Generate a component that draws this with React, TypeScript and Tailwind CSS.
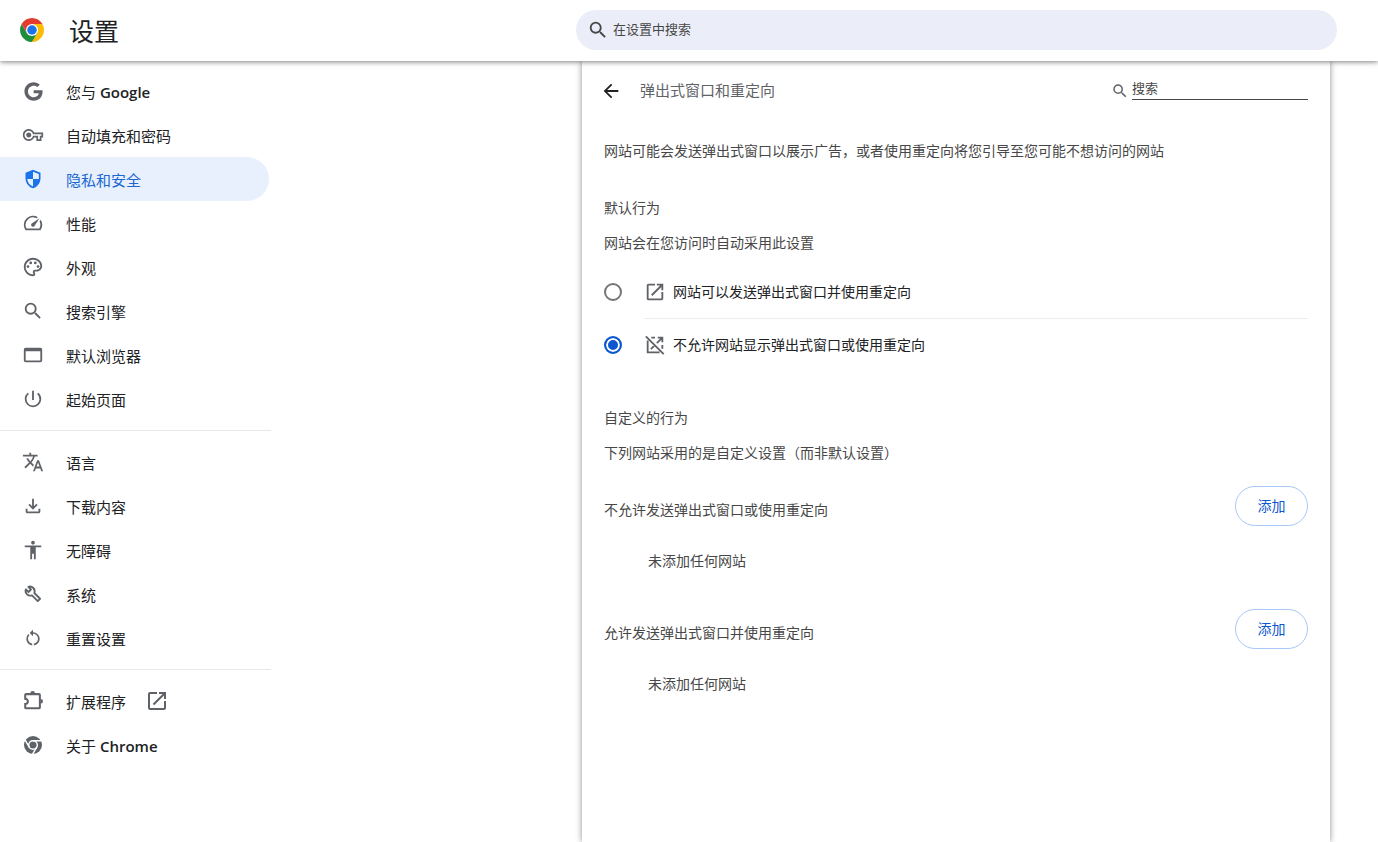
import React, { useState } from 'react';
import {
  MdAccessibility,
  MdArrowBack,
  MdOpenInNew,
  MdOutlinePalette,
  MdPowerSettingsNew,
  MdRestartAlt,
  MdSearch,
  MdSpeed,
  MdTranslate,
} from 'react-icons/md';
import { FaGoogle } from 'react-icons/fa';

const KeyIcon = () => (
  <svg viewBox="-1 -1 26 26" fill="currentColor" className="size-[22px]">
    <path d="M22 19h-6v-4h-2.68c-1.14 2.42-3.6 4-6.32 4-3.86 0-7-3.14-7-7s3.14-7 7-7c2.72 0 5.17 1.58 6.32 4H24v6h-2v4zm-4-2h2v-4h2v-2H11.94l-.23-.67C11.01 8.34 9.11 7 7 7c-2.76 0-5 2.24-5 5s2.24 5 5 5c2.11 0 4.01-1.34 4.71-3.33l.23-.67H18v4zM7 15c-1.65 0-3-1.35-3-3s1.35-3 3-3 3 1.35 3 3-1.35 3-3 3z" />
  </svg>
);

const ShieldIcon = () => (
  <svg viewBox="0 0 24 24" fill="currentColor" className="size-5">
    <path
      fillRule="evenodd"
      d="M12 1 3 4.500v6.500c0 5.550 3.840 10.740 9 12 5.160-1.260 9-6.450 9-12V4.500L12 1zM12 12H5c.530 4.120 3.280 7.790 7 8.940V12h7V6L12 3.190V12z"
    />
  </svg>
);

const BrowserIcon = () => (
  <svg viewBox="0 0 24 24" fill="currentColor" className="size-[22px]">
    <path d="M20 4H4a2 2 0 0 0-2 2v12a2 2 0 0 0 2 2h16a2 2 0 0 0 2-2V6a2 2 0 0 0-2-2zm0 14H4V8h16v10z" />
  </svg>
);

const DownloadIcon = () => (
  <svg viewBox="0 -960 960 960" fill="currentColor" className="size-[22px]">
    <path d="M480-320 280-520l56-58 104 104v-326h80v326l104-104 56 58-200 200ZM240-160q-33 0-56.500-23.500T160-240v-120h80v120h480v-120h80v120q0 33-23.500 56.500T720-160H240Z" />
  </svg>
);

const WrenchIcon = () => (
  <svg viewBox="0 0 24 24" className="size-5">
    <path
      d="M6.400 3.400 9.600 6.600 6.600 9.600 3.400 6.400A5.700 5.700 0 0 0 10.800 13.600L17.700 20.500 20.500 17.700 13.600 10.800A5.700 5.700 0 0 0 6.400 3.400z"
      fill="none"
      stroke="currentColor"
      strokeWidth="2.200"
      strokeLinejoin="round"
    />
  </svg>
);

const ExtensionIcon = () => (
  <svg viewBox="0 0 24 24" className="size-[22px]">
    <path
      d="M4.500 4.500h14a1 1 0 0 1 1 1v13.500a1 1 0 0 1-1 1h-14a1 1 0 0 1-1-1V15.300a2.900 2.900 0 0 0 0-5.800V5.500a1 1 0 0 1 1-1z"
      fill="none"
      stroke="currentColor"
      strokeWidth="2.200"
    />
    <path d="M9 3.700a2.600 2.600 0 0 1 5.200 0zM20.300 9.700a2.600 2.600 0 0 1 0 5.200z" fill="currentColor" />
  </svg>
);

const OpenBlockedIcon = () => (
  <svg viewBox="0 0 24 24" fill="none" stroke="currentColor" strokeWidth="2" className="size-[22px]">
    <path d="M4 7v13h13M8 4h4M20 12v4M15 4h5v5M19.500 4.500l-5.500 5.500M11.500 12.500l-4 4M2 2.500l19.500 19.500" />
  </svg>
);

const ChromeMonoIcon = () => (
  <svg viewBox="0 0 48 48" className="size-[18px]">
    <circle cx="24" cy="24" r="24" fill="currentColor" />
    <g fill="none" stroke="#fff" strokeWidth="4">
      <circle cx="24" cy="24" r="11.500" />
      <path d="M24 12.500h24M14 29.800 2 9M34 29.800 22 50" />
    </g>
  </svg>
);

const ChromeLogo = () => (
  <svg viewBox="0 0 48 48" className="size-6 shrink-0">
    <path d="M44.780 12A24 24 0 0 1 24 48l10.390-18L24 12z" fill="#fbbc04" />
    <path d="M24 48A24 24 0 0 1 3.220 12l10.390 18L34.390 30z" fill="#1e8e3e" />
    <path d="M3.220 12 13.610 30 24 24 34.390 30 24 12h20.780A24 24 0 0 0 3.220 12z" fill="#e33b2e" />
    <circle cx="24" cy="24" r="12" fill="#fff" />
    <circle cx="24" cy="24" r="9.500" fill="#1a73e8" />
  </svg>
);

interface MenuItem {
  label: string;
  latin?: string;
  icon: React.ReactNode;
  active?: boolean;
  external?: boolean;
}

const menuGroups: MenuItem[][] = [
  [
    { label: '您与', latin: 'Google', icon: <FaGoogle size={19} /> },
    { label: '自动填充和密码', icon: <KeyIcon /> },
    { label: '隐私和安全', icon: <ShieldIcon />, active: true },
    { label: '性能', icon: <MdSpeed size={22} /> },
    { label: '外观', icon: <MdOutlinePalette size={22} /> },
    { label: '搜索引擎', icon: <MdSearch size={22} /> },
    { label: '默认浏览器', icon: <BrowserIcon /> },
    { label: '起始页面', icon: <MdPowerSettingsNew size={22} /> },
  ],
  [
    { label: '语言', icon: <MdTranslate size={22} /> },
    { label: '下载内容', icon: <DownloadIcon /> },
    { label: '无障碍', icon: <MdAccessibility size={22} /> },
    { label: '系统', icon: <WrenchIcon /> },
    { label: '重置设置', icon: <MdRestartAlt size={20} /> },
  ],
  [
    { label: '扩展程序', icon: <ExtensionIcon />, external: true },
    { label: '关于', latin: 'Chrome', icon: <ChromeMonoIcon /> },
  ],
];

const Sidebar = () => (
  <nav className="w-[271px] shrink-0 pt-2">
    {menuGroups.map((group, index) => (
      <ul key={index} className={index > 0 ? 'mt-[9px] border-t border-[#e8e8e8] pt-[9px]' : ''}>
        {group.map((item) => (
          <li key={item.label}>
            <a
              href="#"
              className={`mr-0.5 flex h-11 items-center rounded-r-full pl-[22px] text-[15px] ${
                item.active ? 'bg-[#e8f0fe] text-[#1967d2]' : 'text-[#202124]'
              }`}
            >
              <span
                className={`mr-[22px] flex w-[22px] shrink-0 justify-center ${
                  item.active ? 'text-[#1a73e8]' : 'text-[#5f6368]'
                }`}
              >
                {item.icon}
              </span>
              <span className="pt-0.5">
                {item.label}
                {item.latin && <span className="font-semibold"> {item.latin}</span>}
              </span>
              {item.external && <MdOpenInNew size={24} className="ml-[19px] text-[#5f6368]" />}
            </a>
          </li>
        ))}
      </ul>
    ))}
  </nav>
);

interface SiteListProps {
  title: string;
}

const SiteList: React.FC<SiteListProps> = ({ title }) => (
  <section>
    <div className="flex h-10 justify-between">
      <h3 className="pt-3 leading-6">{title}</h3>
      <button
        type="button"
        className="h-10 w-[73px] rounded-full border border-[#a8c7fa] text-[#0b57d0]"
      >
        添加
      </button>
    </div>
    <p className="flex h-[70px] items-center pl-11">未添加任何网站</p>
  </section>
);

const options = [
  { value: 'allow', label: '网站可以发送弹出式窗口并使用重定向', icon: <MdOpenInNew size={22} /> },
  { value: 'block', label: '不允许网站显示弹出式窗口或使用重定向', icon: <OpenBlockedIcon /> },
];

const App = () => {
  const [behavior, setBehavior] = useState('block');

  return (
    <div className="flex min-h-screen flex-col bg-white font-['Open_Sans','Noto_Sans_CJK_SC',sans-serif] text-[#202124]">
      <header className="z-10 flex h-[61px] shrink-0 items-center bg-white pb-px pl-5 pr-[41px] shadow-[0_1px_5px_rgba(0,0,0,0.5)]">
        <ChromeLogo />
        <h1 className="ml-[25px] mr-auto shrink-0 pt-1 text-[25px]">设置</h1>
        <label className="flex h-10 w-full max-w-[761px] items-center gap-1 rounded-full bg-[#ebeef8] pl-[11px] text-[#474747]">
          <MdSearch size={22} className="shrink-0" />
          <input
            type="text"
            aria-label="在设置中搜索"
            placeholder="在设置中搜索"
            className="w-full bg-transparent text-[13px] outline-none placeholder:text-[#474747]"
          />
        </label>
      </header>

      <div className="flex flex-1">
        <Sidebar />
        <main className="ml-auto mr-12 w-full max-w-[748px] bg-white px-[22px] text-sm text-[#474747] shadow-[0_0_6px_rgba(0,0,0,0.45)]">
          <div className="flex h-[60px] items-center">
            <button type="button" aria-label="返回" className="-ml-1 text-[#202124]">
              <MdArrowBack size={22} />
            </button>
            <h2 className="ml-[18px] text-[15px] text-[#5f6368]">弹出式窗口和重定向</h2>
            <label className="ml-auto flex items-center gap-[3px]">
              <MdSearch size={18} className="text-[#5f6368]" />
              <input
                type="text"
                aria-label="搜索"
                placeholder="搜索"
                className="mb-1 h-[22px] w-44 border-b border-[#474747] pb-0.5 text-[13px] outline-none placeholder:text-[#474747]"
              />
            </label>
          </div>

          <p className="flex min-h-[60px] items-center">
            网站可能会发送弹出式窗口以展示广告，或者使用重定向将您引导至您可能不想访问的网站
          </p>

          <h2 className="mt-[9px] leading-9">默认行为</h2>
          <p className="leading-[34px]">网站会在您访问时自动采用此设置</p>
          <div role="radiogroup" aria-label="默认行为" className="mt-1.5 text-[#202124]">
            {options.map((option, index) => (
              <div key={option.value}>
                {index > 0 && <hr className="ml-10 border-[#ececec]" />}
                <label className="flex h-[52px] items-center">
                  <input
                    type="radio"
                    name="behavior"
                    value={option.value}
                    checked={behavior === option.value}
                    onChange={() => setBehavior(option.value)}
                    className="size-[18px] appearance-none rounded-full border-2 border-[#747775] checked:border-[#0b57d0] checked:bg-[#0b57d0] checked:shadow-[inset_0_0_0_2px_white]"
                  />
                  <span className="ml-[22px] mr-[7px] text-[#5f6368]">{option.icon}</span>
                  {option.label}
                </label>
              </div>
            ))}
          </div>

          <h2 className="mt-[29px] leading-9">自定义的行为</h2>
          <p className="leading-[34px]">下列网站采用的是自定义设置（而非默认设置）</p>
          <div className="mt-4 flex flex-col gap-[13px]">
            <SiteList title="不允许发送弹出式窗口或使用重定向" />
            <SiteList title="允许发送弹出式窗口并使用重定向" />
          </div>
        </main>
      </div>
    </div>
  );
};

export default App;
